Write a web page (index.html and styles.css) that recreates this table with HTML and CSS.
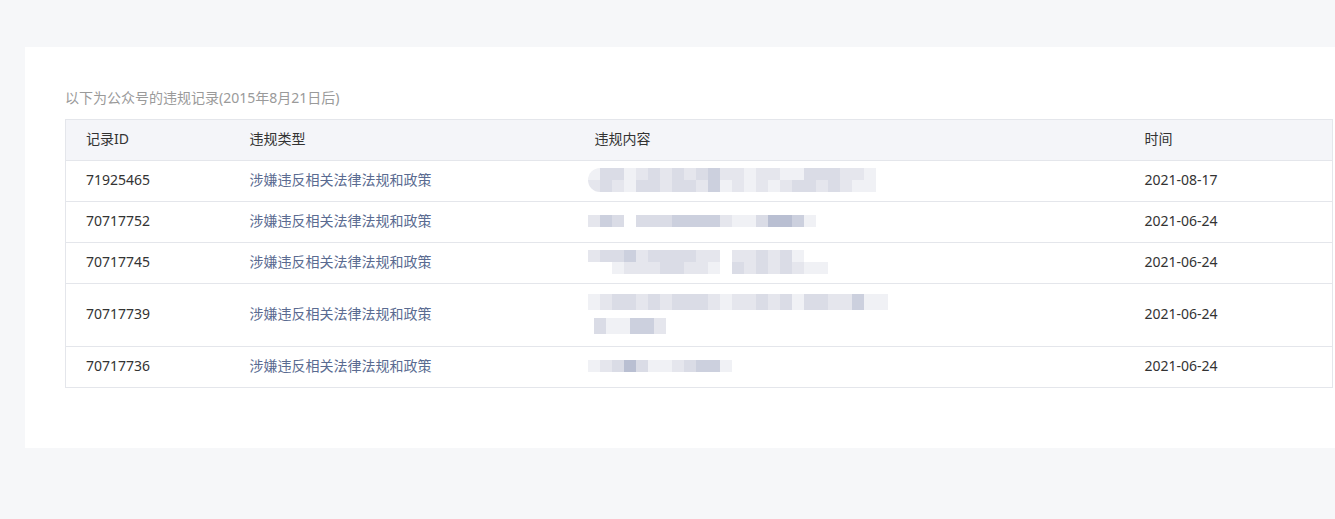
FILE: index.html
```html
<!DOCTYPE html>
<html lang="zh">
<head>
<meta charset="utf-8">
<link rel="stylesheet" href="styles.css">
</head>
<body>
<div class="page">
  <div class="card">
    <p class="caption">以下为公众号的违规记录(2015年8月21日后)</p>
    <table class="records">
      <colgroup>
        <col class="c-id"><col class="c-type"><col class="c-content"><col class="c-time">
      </colgroup>
      <thead>
        <tr><th>记录ID</th><th>违规类型</th><th>违规内容</th><th>时间</th></tr>
      </thead>
      <tbody>
        <tr>
          <td>71925465</td>
          <td class="type">涉嫌违反相关法律法规和政策</td>
          <td>
            <div class="mosaic round">
              <div class="mrow"><i class="a"></i><i class="c"></i><i class="c"></i><i class="a"></i><i class="b"></i><i class="c"></i><i class="b"></i><i class="c"></i><i class="b"></i><i class="c"></i><i class="d"></i><i class="b"></i><i class="b"></i><i class="a"></i><i class="b"></i><i class="b"></i><i class="a"></i><i class="a"></i><i class="c"></i><i class="c"></i><i class="c"></i><i class="b"></i><i class="b"></i><i class="a"></i></div>
              <div class="mrow"><i class="b"></i><i class="c"></i><i class="b"></i><i class="a"></i><i class="c"></i><i class="c"></i><i class="b"></i><i class="c"></i><i class="c"></i><i class="b"></i><i class="d"></i><i class="a"></i><i class="b"></i><i class="a"></i><i class="b"></i><i class="a"></i><i class="b"></i><i class="c"></i><i class="c"></i><i class="b"></i><i class="c"></i><i class="b"></i><i class="a"></i><i class="a"></i></div>
            </div>
          </td>
          <td>2021-08-17</td>
        </tr>
        <tr>
          <td>70717752</td>
          <td class="type">涉嫌违反相关法律法规和政策</td>
          <td>
            <div class="mosaic">
              <div class="mrow"><i class="b"></i><i class="d"></i><i class="c"></i><i class="w"></i><i class="c"></i><i class="c"></i><i class="c"></i><i class="d"></i><i class="d"></i><i class="d"></i><i class="d"></i><i class="b"></i><i class="a"></i><i class="a"></i><i class="c"></i><i class="e"></i><i class="e"></i><i class="d"></i><i class="a"></i></div>
            </div>
          </td>
          <td>2021-06-24</td>
        </tr>
        <tr>
          <td>70717745</td>
          <td class="type">涉嫌违反相关法律法规和政策</td>
          <td>
            <div class="mosaic">
              <div class="mrow"><i class="b"></i><i class="c"></i><i class="c"></i><i class="d"></i><i class="b"></i><i class="c"></i><i class="c"></i><i class="c"></i><i class="c"></i><i class="b"></i><i class="b"></i><i class="w"></i><i class="b"></i><i class="b"></i><i class="c"></i><i class="b"></i><i class="c"></i><i class="a"></i></div>
              <div class="mrow"><i class="w"></i><i class="w"></i><i class="a"></i><i class="b"></i><i class="b"></i><i class="b"></i><i class="c"></i><i class="c"></i><i class="b"></i><i class="b"></i><i class="a"></i><i class="w"></i><i class="c"></i><i class="b"></i><i class="c"></i><i class="b"></i><i class="c"></i><i class="b"></i><i class="a"></i><i class="a"></i></div>
            </div>
          </td>
          <td>2021-06-24</td>
        </tr>
        <tr class="tall">
          <td>70717739</td>
          <td class="type">涉嫌违反相关法律法规和政策</td>
          <td>
            <div class="mosaic">
              <div class="mrow big"><i class="a"></i><i class="b"></i><i class="c"></i><i class="c"></i><i class="b"></i><i class="c"></i><i class="b"></i><i class="c"></i><i class="c"></i><i class="c"></i><i class="b"></i><i class="a"></i><i class="b"></i><i class="b"></i><i class="c"></i><i class="b"></i><i class="c"></i><i class="a"></i><i class="c"></i><i class="c"></i><i class="b"></i><i class="b"></i><i class="d"></i><i class="a"></i><i class="a"></i></div>
              <div class="mrow second"><i class="c"></i><i class="a"></i><i class="a"></i><i class="d"></i><i class="d"></i><i class="b"></i></div>
            </div>
          </td>
          <td>2021-06-24</td>
        </tr>
        <tr>
          <td>70717736</td>
          <td class="type">涉嫌违反相关法律法规和政策</td>
          <td>
            <div class="mosaic">
              <div class="mrow"><i class="a"></i><i class="b"></i><i class="c"></i><i class="e"></i><i class="c"></i><i class="a"></i><i class="a"></i><i class="b"></i><i class="c"></i><i class="d"></i><i class="d"></i><i class="a"></i></div>
            </div>
          </td>
          <td>2021-06-24</td>
        </tr>
      </tbody>
    </table>
  </div>
</div>
</body>
</html>
```
FILE: styles.css
```css
html, body {
  margin: 0;
  padding: 0;
  background: #f6f7f9;
  font-family: "Noto Sans", "Noto Sans CJK SC", "Microsoft YaHei", sans-serif;
}
.page {
  padding: 47px 0 0 25px;
  height: 519px;
  box-sizing: border-box;
  overflow: hidden;
}
.card {
  background: #fff;
  height: 401px;
  padding: 40px 3px 0 40px;
  box-sizing: border-box;
}
.caption {
  margin: 0 0 10px 0;
  font-size: 14px;
  line-height: 22px;
  color: #9a9a9a;
}
.records {
  width: 1267px;
  border-collapse: collapse;
  border: 1px solid #e4e6eb;
  font-size: 14px;
  line-height: 18px;
  color: #333;
  table-layout: fixed;
}
.c-id { width: 164px; }
.c-type { width: 345px; }
.c-content { width: 550px; }
.c-time { width: 208px; }
.records th {
  background: #f4f5f9;
  font-weight: normal;
  text-align: left;
  height: 38px;
  padding: 0 0 2px 20px;
  color: #333;
  border-bottom: 1px solid #e4e6eb;
}
.records td {
  height: 38px;
  padding: 0 0 2px 20px;
  border-bottom: 1px solid #e4e6eb;
  vertical-align: middle;
}
.records tr.tall td { height: 60px; }
.records td.type { color: #5a6b91; }
.mosaic {
  display: flex;
  flex-direction: column;
  margin-left: -7px;
}
.mrow { display: flex; height: 12px; }
.mrow.big { height: 16px; }
.mrow.second { margin: 8px 0 0 6px; height: 16px; }
.mrow i { display: block; width: 12px; height: 100%; }
.mosaic.round { border-radius: 12px 0 0 12px; overflow: hidden; width: fit-content; }
.mrow .w { background: #fff; }
.mrow .a { background: #f0f1f5; }
.mrow .b { background: #e5e6ed; }
.mrow .c { background: #dadce6; }
.mrow .d { background: #ccd0de; }
.mrow .e { background: #b9bfd2; }
```
